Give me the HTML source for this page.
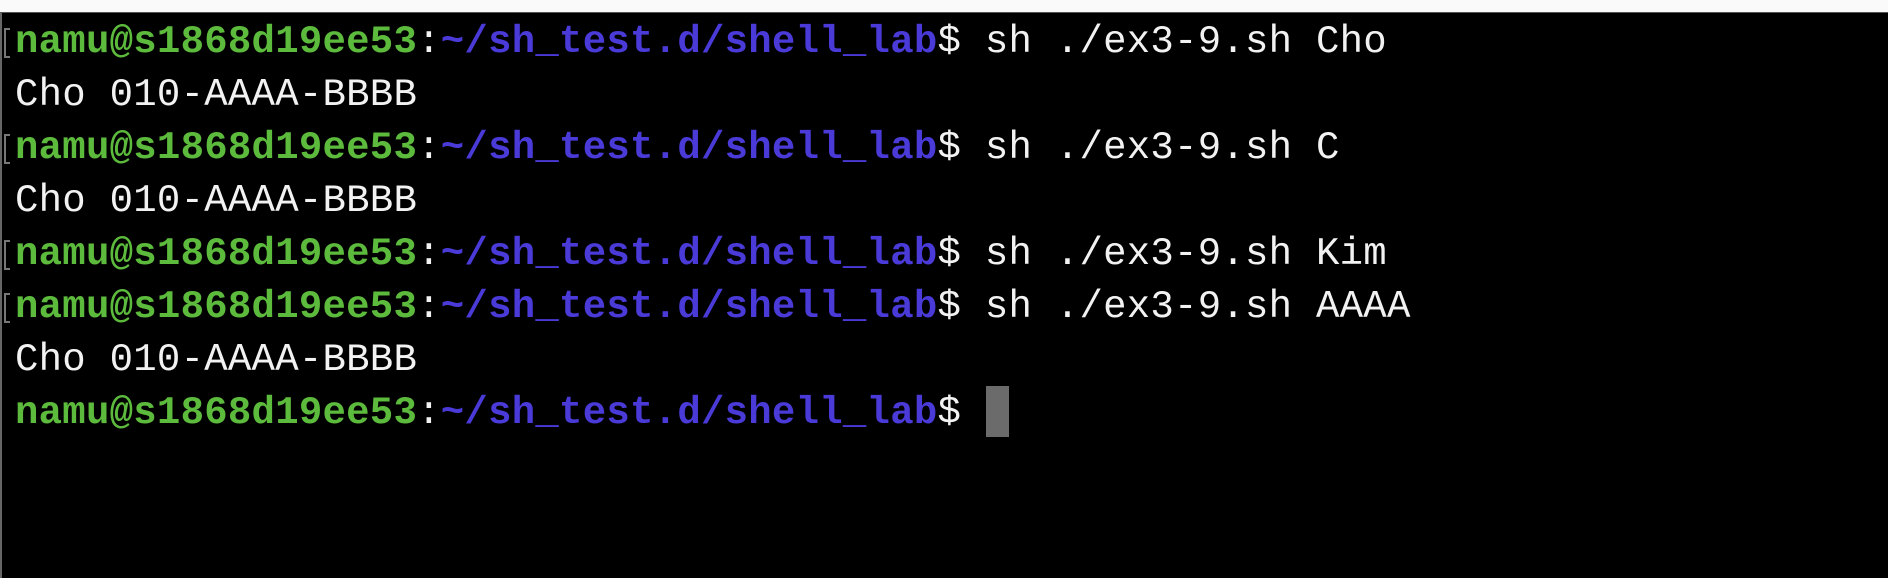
<!DOCTYPE html>
<html><head><meta charset="utf-8"><style>
html,body{margin:0;padding:0;width:1888px;height:578px;overflow:hidden;background:#000;}
.top{position:absolute;left:0;top:0;width:1888px;height:12px;background:#fafafa;border-bottom:1px solid #555;}
.term{position:absolute;left:0;top:13px;width:1888px;height:565px;background:#000;border-left:2px solid #666;box-sizing:border-box;}
.line{position:absolute;left:15px;height:53px;line-height:53px;font-family:"Liberation Mono","DejaVu Sans Mono",monospace;font-size:39px;letter-spacing:0.25px;color:#f2f2f2;white-space:pre;}
.g{color:#5cba3c;font-weight:bold;}
.p{color:#4a3ad8;font-weight:bold;}
.br{position:absolute;left:4px;width:6px;height:30px;border:2px solid #777;border-right:none;box-sizing:border-box;}
.cur{position:absolute;left:986px;top:386px;width:23px;height:51px;background:#6b6b6b;}
</style></head><body>
<div class="top"></div>
<div class="term"></div>
<div class="line" style="top:16px"><span class="g">namu@s1868d19ee53</span>:<span class="p">~/sh_test.d/shell_lab</span>$ sh ./ex3-9.sh Cho</div>
<div class="line" style="top:69px">Cho 010-AAAA-BBBB</div>
<div class="line" style="top:122px"><span class="g">namu@s1868d19ee53</span>:<span class="p">~/sh_test.d/shell_lab</span>$ sh ./ex3-9.sh C</div>
<div class="line" style="top:175px">Cho 010-AAAA-BBBB</div>
<div class="line" style="top:228px"><span class="g">namu@s1868d19ee53</span>:<span class="p">~/sh_test.d/shell_lab</span>$ sh ./ex3-9.sh Kim</div>
<div class="line" style="top:281px"><span class="g">namu@s1868d19ee53</span>:<span class="p">~/sh_test.d/shell_lab</span>$ sh ./ex3-9.sh AAAA</div>
<div class="line" style="top:334px">Cho 010-AAAA-BBBB</div>
<div class="line" style="top:387px"><span class="g">namu@s1868d19ee53</span>:<span class="p">~/sh_test.d/shell_lab</span>$</div>
<div class="br" style="top:28px"></div>
<div class="br" style="top:134px"></div>
<div class="br" style="top:240px"></div>
<div class="br" style="top:293px"></div>
<div class="cur"></div>
</body></html>
